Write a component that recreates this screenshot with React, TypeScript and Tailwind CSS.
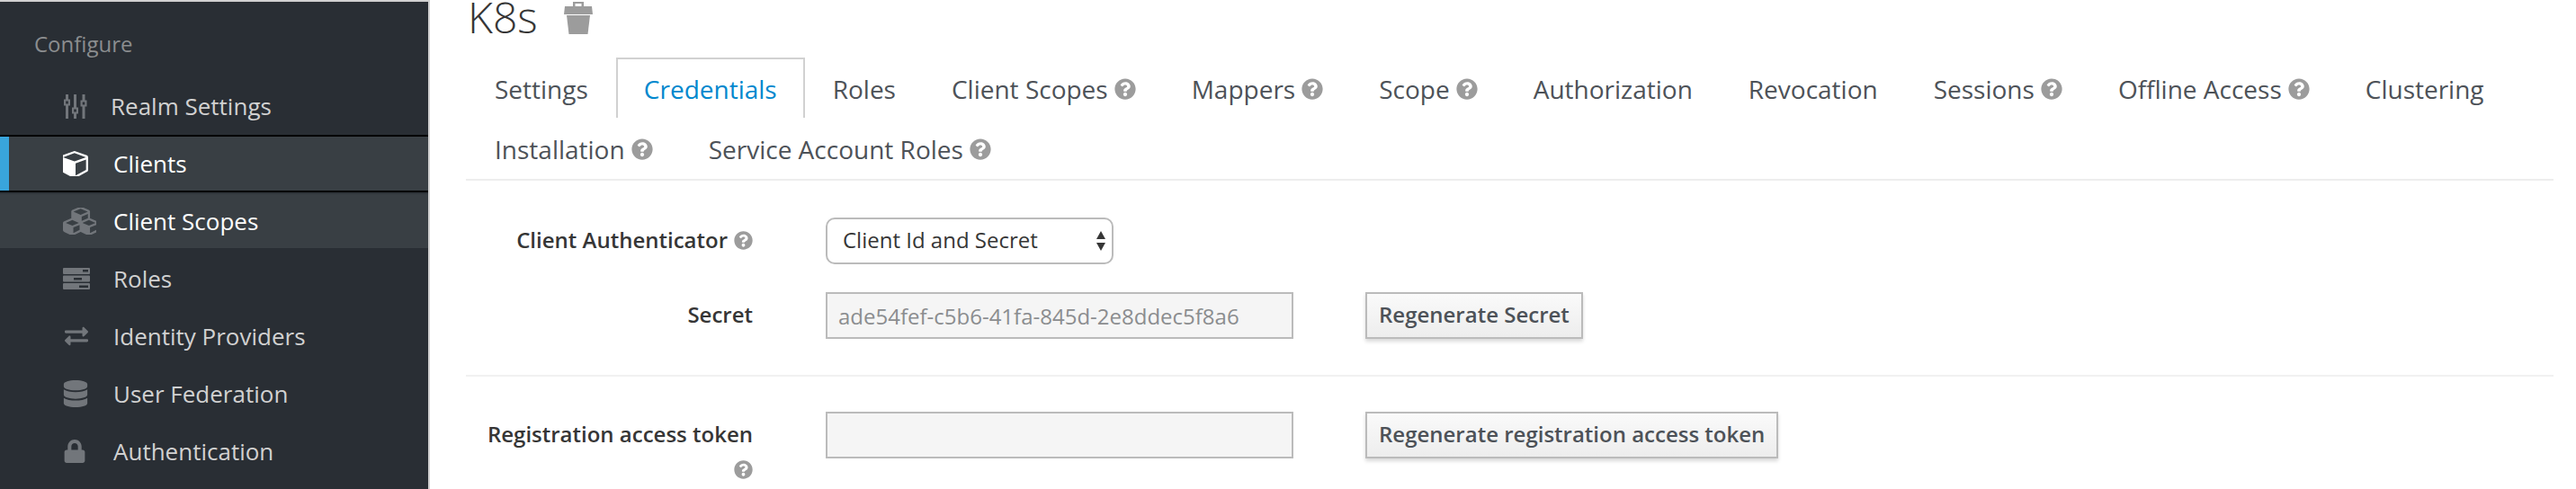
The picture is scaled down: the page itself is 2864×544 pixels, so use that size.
import { FaDatabase, FaExchangeAlt, FaLock, FaQuestionCircle } from 'react-icons/fa'

function SlidersIcon({ className }: { className?: string }) {
  return (
    <svg viewBox="0 0 27 27" className={className} fill="currentColor">
      <path fillRule="evenodd" d="M3 0h3v5.500h-3zM1 5.500h7v7H1zM3.200 7.500v3h2.600v-3zM3 12.500h3V27H3z" />
      <path fillRule="evenodd" d="M12 0h3v14.500h-3zM10 14.500h7v7h-7zM12.200 16.500v3h2.600v-3zM12 21.500h3V27h-3z" />
      <path fillRule="evenodd" d="M21.500 0h3v6.500h-3zM19.500 6.500h7v7h-7zM21.700 8.500v3h2.600v-3zM21.500 13.500h3V27h-3z" />
    </svg>
  )
}

function CubeIcon({ className }: { className?: string }) {
  return (
    <svg viewBox="128 128 1536 1536" className={className} fill="currentColor">
      <path d="M896 1629l640-349v-636l-640 233v752zm-64-864l698-254-698-254-698 254zm832-252v768q0 35-18 65t-49 47l-704 384q-28 16-61 16t-61-16l-704-384q-31-17-49-47t-18-65v-768q0-40 23-73t61-47l704-256q22-8 44-8t44 8l704 256q38 14 61 47t23 73z" />
    </svg>
  )
}

function CubesIcon({ className }: { className?: string }) {
  return (
    <svg viewBox="0 128 2048 1536" className={className} fill="currentColor">
      <path d="M640 1632l384-192v-314l-384 164v342zm-64-454l404-173-404-173-404 173zm1088 454l384-192v-314l-384 164v342zm-64-454l404-173-404-173-404 173zm-448-293l384-165v-266l-384 164v267zm-64-379l441-189-441-189-441 189zm1088 518v416q0 36-19 67t-52 47l-448 224q-25 14-57 14t-57-14l-448-224q-4-2-7-4-2 2-7 4l-448 224q-25 14-57 14t-57-14l-448-224q-33-16-52-47t-19-67v-416q0-38 21.500-70t56.500-48l434-186v-400q0-38 21.500-70t56.500-48l448-192q23-10 50-10t50 10l448 192q35 16 56.500 48t21.500 70v400l434 186q36 16 57 48t21 70z" />
    </svg>
  )
}

function ServerIcon({ className }: { className?: string }) {
  return (
    <svg viewBox="0 0 30 24" className={className} fill="currentColor">
      <path fillRule="evenodd" d="M1 0h28a1 1 0 0 1 1 1v5a1 1 0 0 1-1 1H1a1 1 0 0 1-1-1V1a1 1 0 0 1 1-1zm21 2v2.500h6V2z" />
      <path fillRule="evenodd" d="M1 8.500h28a1 1 0 0 1 1 1v5a1 1 0 0 1-1 1H1a1 1 0 0 1-1-1v-5a1 1 0 0 1 1-1zm11 2.500v2.500h9V11z" />
      <path fillRule="evenodd" d="M1 17h28a1 1 0 0 1 1 1v5a1 1 0 0 1-1 1H1a1 1 0 0 1-1-1v-5a1 1 0 0 1 1-1zm17 2.500V22h10v-2.500z" />
    </svg>
  )
}

function TrashIcon({ className }: { className?: string }) {
  return (
    <svg viewBox="0 0 32 36" className={className} fill="currentColor">
      <path fillRule="evenodd" d="M10 0h12v5h9l1 9H0l1-9h9zm2.500 2v3h7V2z" />
      <path d="M3 15h26l-2.500 21h-21z" />
    </svg>
  )
}

function HelpIcon({ className = '' }: { className?: string }) {
  return <FaQuestionCircle className={`text-[#9c9c9c] ${className}`} />
}

const navItems = [
  { label: 'Realm Settings', icon: <SlidersIcon className="w-[27px] h-[27px]" />, indent: 'ml-[26px]' },
  { label: 'Clients', icon: <CubeIcon className="w-[28px] h-[28px]" />, indent: 'ml-[28px]', active: true },
  { label: 'Client Scopes', icon: <CubesIcon className="w-[37px] h-[30px]" />, indent: 'ml-[19px]', hover: true },
  { label: 'Roles', icon: <ServerIcon className="w-[30px] h-[24px]" />, indent: 'ml-[26px]' },
  { label: 'Identity Providers', icon: <FaExchangeAlt className="w-[30px] h-[26px]" />, indent: 'ml-[26px]' },
  { label: 'User Federation', icon: <FaDatabase className="w-[28px] h-[30px]" />, indent: 'ml-[28px]' },
  { label: 'Authentication', icon: <FaLock className="w-[26px] h-[26px]" />, indent: 'ml-[30px]' },
]

const tabs = [
  { label: 'Settings' },
  { label: 'Credentials', active: true },
  { label: 'Roles' },
  { label: 'Client Scopes', help: true },
  { label: 'Mappers', help: true },
  { label: 'Scope', help: true },
  { label: 'Authorization' },
  { label: 'Revocation' },
  { label: 'Sessions', help: true },
  { label: 'Offline Access', help: true },
  { label: 'Clustering' },
  { label: 'Installation', help: true },
  { label: 'Service Account Roles', help: true },
]

function Sidebar() {
  return (
    <aside className="w-[478px] h-[544px] shrink-0 overflow-hidden bg-[#292e34] border-t-2 border-r-2 border-[#d1d1d1]">
      <div className="h-[84px] pl-[38px] pt-[30px] text-[24px] leading-[34px] text-[#8b8d8f]">Configure</div>
      {navItems.map(item => (
        <div
          key={item.label}
          className={`relative flex items-center pl-[70px] text-[26px] ${
            item.active
              ? 'h-[64px] bg-[#393f44] text-white border-y-2 border-black'
              : item.hover
                ? 'h-[62px] mb-[2px] bg-[#393f44] text-white border-t-2 border-[#30353b]'
                : 'h-[64px] text-[#d1d1d1]'
          }`}
        >
          {item.active && <div className="absolute left-0 top-0 bottom-0 w-[10px] bg-[#39a5dc]" />}
          <span className={item.active ? 'text-white' : 'text-[#72767b]'}>{item.icon}</span>
          <span className={item.indent}>{item.label}</span>
        </div>
      ))}
    </aside>
  )
}

function Field({ children, label, help }: { children: React.ReactNode; label: React.ReactNode; help?: boolean }) {
  return (
    <div className="flex">
      <div className="w-[319px] mr-[81px] text-right font-semibold text-[24px] leading-[50px] text-[#363636]">
        {label}
        {help && <HelpIcon className="inline-block ml-[7px] w-[21px] h-[21px] align-[-2px]" />}
      </div>
      {children}
    </div>
  )
}

const inputClass =
  'w-[520px] h-[52px] px-[12px] bg-[#f5f5f5] border-2 border-[#bbbbbb] text-[24px] text-[#8b8d8f] outline-none'
const buttonClass =
  'ml-[80px] h-[52px] px-[13px] pb-[2px] bg-gradient-to-b from-[#fafafa] to-[#ededed] border-2 border-[#bbbbbb] text-[24px] font-semibold text-[#4d5258] shadow-[0_3px_4px_rgba(3,3,3,0.15)]'

export default function App() {
  return (
    <div className="flex w-[2864px] h-[544px] overflow-hidden bg-white font-['Open_Sans',sans-serif]">
      <Sidebar />
      <main className="flex-1 min-w-0 pl-[40px] pr-[25px]">
        <div className="flex items-start h-[64px]">
          <h1 className="ml-[2px] w-[107px] -mt-[2px] font-light text-[48px] leading-[42px] text-[#363636]">K8s</h1>
          <TrashIcon className="mt-[2px] w-[32px] h-[36px] text-[#9c9c9c]" />
        </div>

        <div className="flex flex-wrap border-b-2 border-[#ededed] pl-[1px] h-[137px] content-start">
          {tabs.map(tab => (
            <div
              key={tab.label}
              className={`flex items-center h-[67px] px-[29px] pt-[1px] border-x-2 border-t-2 text-[28px] ${
                tab.active ? 'border-[#d1d1d1] text-[#0088ce]' : 'border-transparent text-[#4d5258]'
              }`}
            >
              {tab.label}
              {tab.help && <HelpIcon className="ml-[7px] w-[24px] h-[24px]" />}
            </div>
          ))}
        </div>

        <div className="pt-[41px] pb-[40px] border-b-2 border-[#f1f1f1] flex flex-col gap-[31px]">
          <Field label="Client Authenticator" help>
            <div className="relative h-[52px]">
              <select className="w-[320px] h-[52px] pl-[17px] pb-[2px] appearance-none bg-white border-2 border-[#bbbbbb] rounded-[10px] text-[24px] text-[#363636]">
                <option>Client Id and Secret</option>
              </select>
              <svg viewBox="0 0 12 22" className="absolute right-[8px] top-[15px] w-[12px] h-[22px] pointer-events-none text-[#363636]" fill="currentColor">
                <path d="M6 0l5 9H1zM6 22l-5-9h10z" />
              </svg>
            </div>
          </Field>
          <Field label="Secret">
            <input disabled value="ade54fef-c5b6-41fa-845d-2e8ddec5f8a6" className={inputClass} readOnly />
            <button className={buttonClass}>Regenerate Secret</button>
          </Field>
        </div>

        <div className="pt-[39px]">
          <Field
            label={
              <>
                <div>Registration access token</div>
                <div className="flex justify-end mt-[4px]">
                  <HelpIcon className="w-[21px] h-[21px]" />
                </div>
              </>
            }
          >
            <input disabled className={inputClass} readOnly />
            <button className={buttonClass}>Regenerate registration access token</button>
          </Field>
        </div>
      </main>
    </div>
  )
}
